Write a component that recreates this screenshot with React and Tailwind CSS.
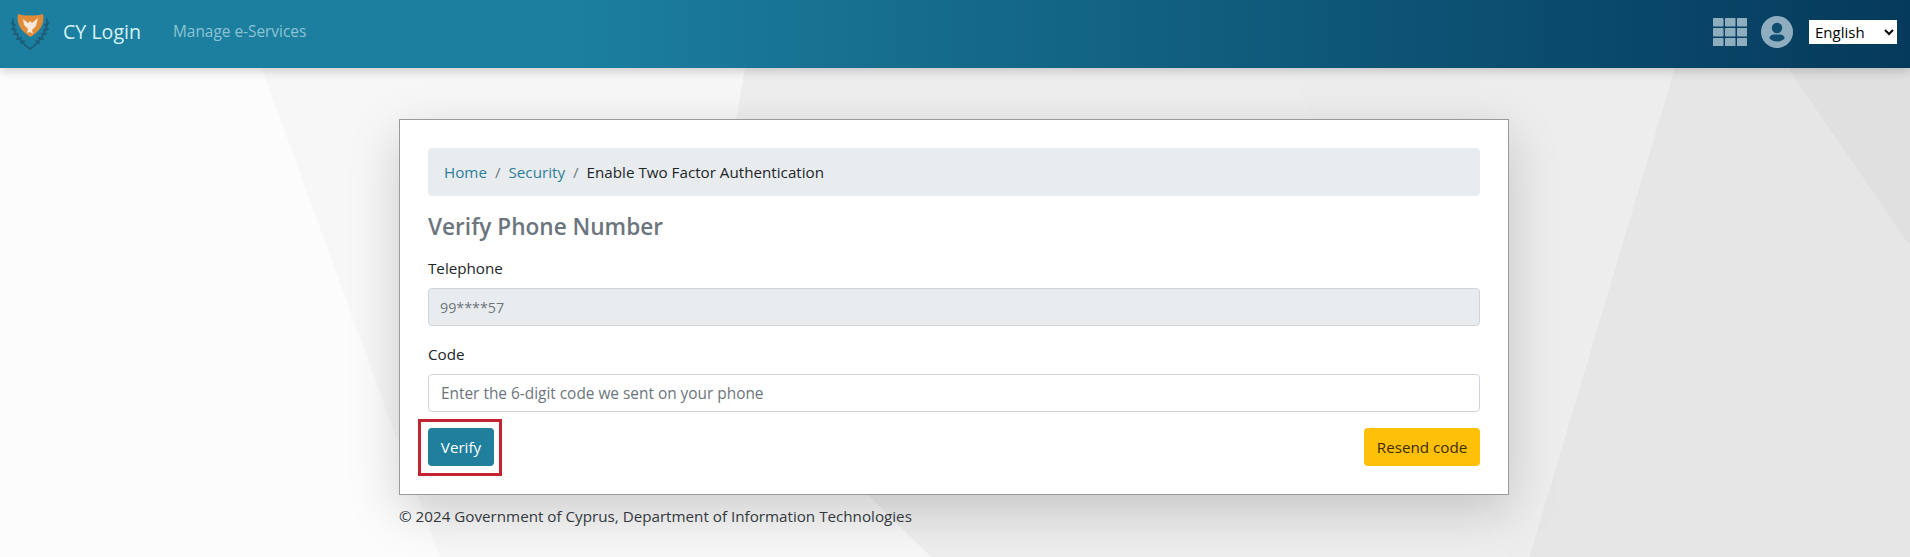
import React from 'react'

export default function App(){
  return (
    <div className="relative h-[557px] overflow-hidden bg-[#fcfcfd] text-[15.2px] text-[#212529] font-['Open_Sans','Noto_Sans',sans-serif]">
      <Backdrop />
      <Navbar />
      <main className="relative ml-[399px] w-[1110px] pt-[51px]">
        <section className="border border-[#9a9a9a] bg-white p-[28px] shadow-[0_16px_48px_rgba(0,0,0,0.175)]">
          <Breadcrumb />
          <h4 className="mt-[17px] mb-[15px] text-[22.6px] leading-[28px] font-semibold text-[#6c757d]">Verify Phone Number</h4>
          <Field label="Telephone">
            <input readOnly value="99****57" className="block h-[38px] w-full rounded border border-[#ced4da] bg-[#e9ecef] px-[11px] text-[14.3px] text-[#6c757d] outline-none" />
          </Field>
          <Field label="Code">
            <input placeholder="Enter the 6-digit code we sent on your phone" className="block h-[38px] w-full rounded border border-[#ced4da] bg-white px-3 text-[15.4px] outline-none placeholder:text-[#6c757d]" />
          </Field>
          <div className="flex items-center justify-between">
            <div className="relative">
              <button className="h-[38px] w-[66px] rounded bg-[#1f7f9d] text-[15.2px] text-white">Verify</button>
              <div className="absolute -top-[9px] -left-[10px] h-[57px] w-[84px] border-[3px] border-[#c4232f]"></div>
            </div>
            <button className="h-[38px] w-[116px] rounded bg-[#ffc107] text-[15.2px] text-[#3a2c05]">Resend code</button>
          </div>
        </section>
        <footer className="mt-[9px] text-[15.2px] leading-6 text-[#33383d]">© 2024 Government of Cyprus, Department of Information Technologies</footer>
      </main>
    </div>
  )
}

function Backdrop(){
  return (
    <svg className="absolute inset-0" width="1910" height="557" viewBox="0 0 1910 557" aria-hidden="true">
      <polygon points="255,50 748,50 700,330 931,557 440,557" fill="#f7f7f7" />
      <polygon points="748,50 1281,50 1507,557 931,557 700,330" fill="#eeeeee" />
      <polygon points="1281,50 1680,50 1529,557 1507,557" fill="#ededee" />
      <polygon points="1680,50 1775,50 1910,247 1910,557 1529,557" fill="#e6e6e6" />
      <polygon points="1775,50 1910,50 1910,247" fill="#e0e0e0" />
    </svg>
  )
}

function Navbar(){
  return (
    <header className="relative flex h-[68px] items-center bg-linear-to-r from-[#1c7f9f] from-30% to-[#063a5c] pb-[5px] shadow-[0_3px_10px_rgba(0,0,0,0.18)]">
      <Crest />
      <span className="ml-[13px] text-[19.6px] text-[#d4f3fa]">CY Login</span>
      <span className="ml-[32px] text-[15.4px] text-[#8cc3d4]">Manage e-Services</span>
      <div className="ml-auto flex items-center">
        <GridIcon />
        <UserIcon />
        <select defaultValue="English" className="ml-[16px] mr-[13px] h-[24px] w-[88px] bg-white pl-[2px] text-[15px] text-black outline-none">
          <option>English</option>
          <option>Ελληνικά</option>
        </select>
      </div>
    </header>
  )
}

function Crest(){
  return (
    <svg className="ml-[10px] shrink-0" width="40" height="38" viewBox="0 0 40 38" aria-hidden="true">
      <g fill="none" stroke="#1d5d76" strokeLinecap="round">
        <path d="M3 6 C2 17 8 27 20 36" strokeWidth="1.6" />
        <path d="M37 6 C38 17 32 27 20 36" strokeWidth="1.6" />
        <path d="M1.5 10 L5 12 M2 16 L6 17 M4 21 L8 21 M7 26 L11 25 M11 30 L14 28" strokeWidth="2" />
        <path d="M38.500 10 L35 12 M38 16 L34 17 M36 21 L32 21 M33 26 L29 25 M29 30 L26 28" strokeWidth="2" />
      </g>
      <path d="M8 1 C14 3 26 3 33 1 C35 11 30 18 20.500 24 C11 18 6 11 8 1 Z" fill="#df8b3a" />
      <path d="M13 6 L18 10 L20 8 L22 10 L28 5 L26 13 L22 17 L23 21 L20 19 L17 20 L18 16 L14 12 Z" fill="#f6e9da" />
    </svg>
  )
}

function GridIcon(){
  const cells = [0, 1, 2, 3, 4, 5, 6, 7, 8]
  return (
    <svg width="34" height="28" viewBox="0 0 34 28" fill="#8eaec0" aria-hidden="true">
      {cells.map(i => (
        <rect key={i} x={(i % 3) * 12} y={Math.floor(i / 3) * 10} width="10.5" height="8.5" rx="0.8" />
      ))}
    </svg>
  )
}

function UserIcon(){
  return (
    <svg className="ml-[14px]" width="32" height="32" viewBox="0 0 32 32" aria-hidden="true">
      <circle cx="16" cy="16" r="16" fill="#8eaec0" />
      <circle cx="16" cy="12" r="5.2" fill="#0f4c6d" />
      <path d="M8.500 22.500 C8.500 19.500 11 18.500 13 18.500 L19 18.500 C21 18.500 23.500 19.500 23.500 22.500 C21.500 24.600 19 25.500 16 25.500 C13 25.500 10.500 24.600 8.500 22.500 Z" fill="#0f4c6d" />
    </svg>
  )
}

function Breadcrumb(){
  return (
    <nav className="flex h-[48px] items-center rounded bg-[#e9ecef] px-4 text-[15.2px]">
      <a className="text-[#2a7f99]">Home</a>
      <span className="px-2 text-[#6c757d]">/</span>
      <a className="text-[#2a7f99]">Security</a>
      <span className="px-2 text-[#6c757d]">/</span>
      <span>Enable Two Factor Authentication</span>
    </nav>
  )
}

function Field({ label, children }){
  return (
    <div className="mb-4">
      <label className="mb-2 block text-[15.2px] leading-6">{label}</label>
      {children}
    </div>
  )
}
